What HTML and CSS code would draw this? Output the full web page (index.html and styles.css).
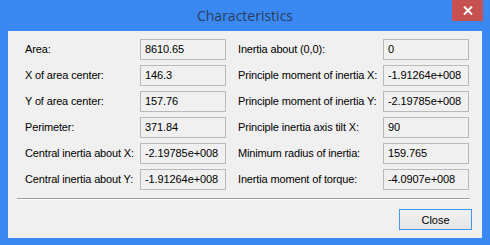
FILE: index.html
```html
<!DOCTYPE html>
<html lang="en">

<head>
    <meta charset="UTF-8">
    <title>Characteristics</title>
    <link rel="stylesheet" href="styles.css">
</head>

<body>
    <div class="window">
        <div class="titlebar">
            <span class="title">Characteristics</span>
            <span class="close-x">
                <svg width="10" height="9" viewBox="0 0 10 9">
                    <path d="M1 0.5 L9 8.5 M9 0.5 L1 8.5" stroke="#fff" stroke-width="2"/>
                </svg>
            </span>
        </div>

        <div class="client">
            <div class="grid">
                <label>Area:</label>
                <div class="field">8610.65</div>
                <label class="right">Inertia about (0,0):</label>
                <div class="field">0</div>

                <label>X of area center:</label>
                <div class="field">146.3</div>
                <label class="right">Principle moment of inertia X:</label>
                <div class="field">-1.91264e+008</div>

                <label>Y of area center:</label>
                <div class="field">157.76</div>
                <label class="right">Principle moment of inertia Y:</label>
                <div class="field">-2.19785e+008</div>

                <label>Perimeter:</label>
                <div class="field">371.84</div>
                <label class="right">Principle inertia axis tilt X:</label>
                <div class="field">90</div>

                <label>Central inertia about X:</label>
                <div class="field">-2.19785e+008</div>
                <label class="right">Minimum radius of inertia:</label>
                <div class="field">159.765</div>

                <label>Central inertia about Y:</label>
                <div class="field">-1.91264e+008</div>
                <label class="right">Inertia moment of torque:</label>
                <div class="field">-4.0907e+008</div>
            </div>

            <div class="separator"></div>

            <div class="buttons">
                <button type="button">Close</button>
            </div>
        </div>
    </div>
</body>

</html>
```

FILE: styles.css
```css
body {
    margin: 0;
    padding: 0;
    background-color: #3a88f2;
    font-family: "Liberation Sans", Arial, sans-serif;
}

.window {
    width: 490px;
    height: 245px;
    background-color: #3a88f2;
}

.titlebar {
    height: 31px;
    display: flex;
    justify-content: center;
    position: relative;
}

.title {
    font-family: "Open Sans", sans-serif;
    font-size: 14px;
    color: #2a3d5a;
    line-height: 31px;
}

.close-x {
    position: absolute;
    top: 0;
    left: 452px;
    width: 31px;
    height: 21px;
    background-color: #c75050;
    display: flex;
    align-items: center;
    justify-content: center;
}

.client {
    margin: 0 8px;
    height: 207px;
    background-color: #f0f0f0;
    box-sizing: border-box;
    padding-top: 8px;
}

.grid {
    display: grid;
    grid-template-columns: 115px 86px 157px 86px;
    row-gap: 5px;
    margin-left: 17px;
}

label {
    font-size: 11px;
    letter-spacing: -0.15px;
    color: #000;
    line-height: 21px;
    white-space: nowrap;
}

label.right {
    padding-left: 12px;
}

.field {
    height: 21px;
    box-sizing: border-box;
    border: 1px solid #b9b9b9;
    background-color: #f0f0f0;
    font-size: 11px;
    letter-spacing: -0.1px;
    line-height: 19px;
    padding-left: 4px;
    color: #000;
    white-space: nowrap;
    overflow: hidden;
}

.separator {
    margin: 8px 12px 0 9px;
    height: 1px;
    border-top: 1px solid #a0a0a0;
    background-color: #fff;
}

.buttons {
    display: flex;
    justify-content: flex-end;
    margin-top: 9px;
    padding-right: 10px;
}

button {
    width: 73px;
    height: 21px;
    border: 1px solid #3c98f0;
    background: linear-gradient(#f2f2f2, #e5e5e5);
    font-family: "Liberation Sans", Arial, sans-serif;
    font-size: 11px;
    color: #000;
    padding: 0;
}
```
